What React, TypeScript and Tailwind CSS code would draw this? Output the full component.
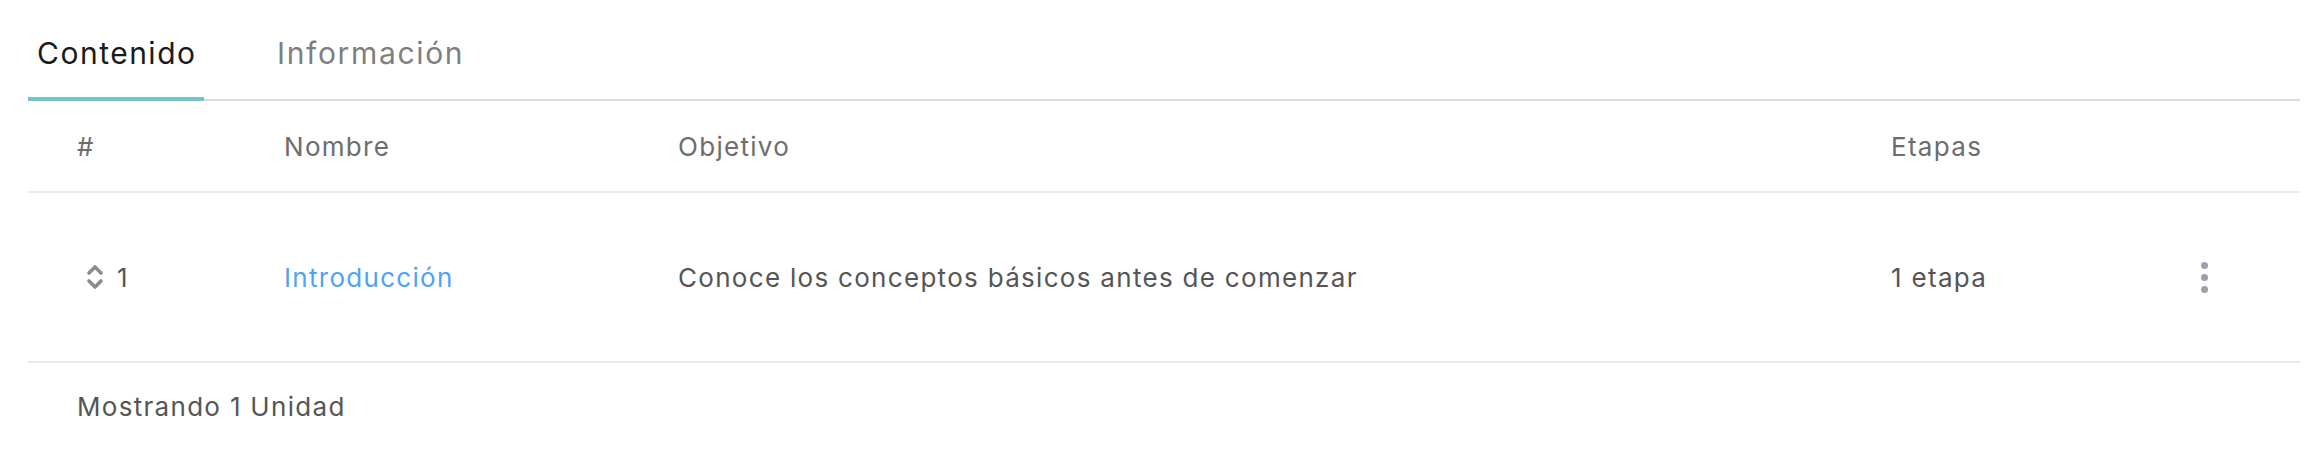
import { useState } from "react";

const font = { fontFamily: '"Inter", "Noto Sans", sans-serif' };

const SortIcon = () => (
  <svg width="18" height="28" viewBox="0 0 18 28" fill="none" className="shrink-0">
    <path d="M3 10L9 4L15 10" stroke="#8c8c8c" strokeWidth="3.6" strokeLinecap="round" strokeLinejoin="round" />
    <path d="M3 18L9 24L15 18" stroke="#8c8c8c" strokeWidth="3.6" strokeLinecap="round" strokeLinejoin="round" />
  </svg>
);

const Kebab = () => (
  <button className="flex w-[34px] flex-col items-center gap-[5px]">
    <span className="h-[7px] w-[7px] rounded-full bg-[#9ba1ab]" />
    <span className="h-[7px] w-[7px] rounded-full bg-[#9ba1ab]" />
    <span className="h-[7px] w-[7px] rounded-full bg-[#9ba1ab]" />
  </button>
);

const cols = "grid grid-cols-[256px_394px_1213px_296px_34px_1fr] items-center";

export default function App() {
  const [tab, setTab] = useState("contenido");

  return (
    <div className="h-[462px] w-full bg-white pl-[28px] pr-[12px]" style={font}>
      {/* Tabs */}
      <div className="flex h-[101px] border-b-2 border-[#dcdcdc]">
        <button
          onClick={() => setTab("contenido")}
          className={`-mb-[2px] h-[101px] w-[176px] border-b-4 pl-[9px] pt-[9px] text-left text-[30px] tracking-[0.05em] ${
            tab === "contenido" ? "border-[#73c5cc] text-[#1b1b1b]" : "border-transparent text-[#7f7f7f]"
          }`}
        >
          Contenido
        </button>
        <button
          onClick={() => setTab("info")}
          className={`-mb-[2px] ml-[64px] h-[101px] border-b-4 pl-[9px] pr-[9px] pt-[9px] text-left text-[30px] tracking-[0.055em] ${
            tab === "info" ? "border-[#73c5cc] text-[#1b1b1b]" : "border-transparent text-[#7f7f7f]"
          }`}
        >
          Información
        </button>
      </div>

      {/* Header */}
      <div className={`${cols} h-[92px] border-b-2 border-[#e6eaef] text-[26px] tracking-[0.05em] text-[#6d6d6d]`}>
        <div className="pl-[49px]">#</div>
        <div>Nombre</div>
        <div>Objetivo</div>
        <div>Etapas</div>
        <div />
        <div />
      </div>

      {/* Row */}
      <div className={`${cols} h-[170px] border-b-2 border-[#e6eaef] text-[26px] tracking-[0.05em] text-[#555555]`}>
        <div className="flex items-center gap-[13px] pl-[58px]">
          <SortIcon />
          <span>1</span>
        </div>
        <div>
          <a className="cursor-pointer text-[#4fa3f7]">Introducción</a>
        </div>
        <div>Conoce los conceptos básicos antes de comenzar</div>
        <div>1 etapa</div>
        <div className="flex justify-center">
          <Kebab />
        </div>
        <div />
      </div>

      {/* Footer */}
      <div className="pl-[49px] pt-[24px] text-[26px] tracking-[0.05em] text-[#555555]">Mostrando 1 Unidad</div>
    </div>
  );
}
